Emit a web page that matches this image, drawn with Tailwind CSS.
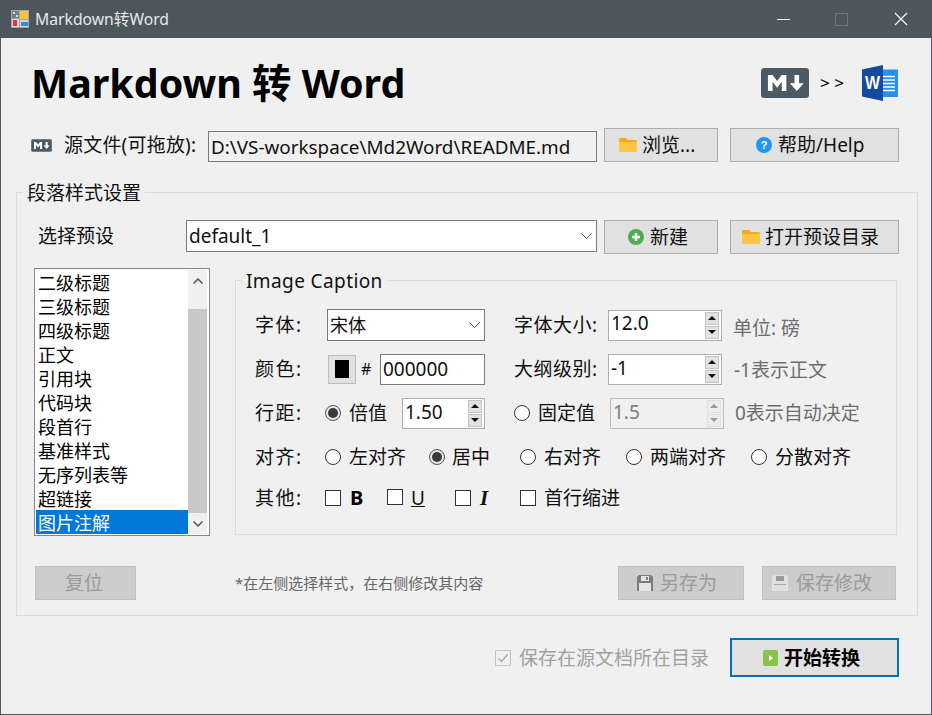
<!DOCTYPE html>
<html lang="zh-CN">
<head>
<meta charset="UTF-8">
<title>Markdown转Word</title>
<script src="https://cdn.jsdelivr.net/npm/@tailwindcss/browser@4"></script>
</head>
<body class="bg-[#f0f0f0]">
<div class="w-[932px] h-[715px] overflow-hidden border-x border-b border-[#4d565c] bg-[#f0f0f0] text-[19px] leading-[24px] text-[#111] font-['Noto_Sans','Noto_Sans_CJK_SC',sans-serif]">

  <!-- title bar -->
  <div class="h-[38px] -mx-px bg-[#4d565c] flex items-center text-[#e6e8e9] text-[15.700px]">
    <svg class="ml-[11px] w-[18px] h-[18px]" viewBox="0 0 18 18">
      <rect width="18" height="18" fill="#a2a5a7"/>
      <rect x="1" y="1" width="7" height="7" fill="#777b7f"/>
      <rect x="2" y="2" width="2" height="2" fill="#d8d8d8"/><rect x="5" y="5" width="2" height="2" fill="#d8d8d8"/>
      <rect x="9" y="1" width="8" height="8" fill="#f8c33a"/>
      <rect x="1" y="9" width="7" height="8" fill="#d8d8d8"/>
      <rect x="2" y="10" width="4" height="6" fill="#d9383a"/>
      <rect x="9" y="10" width="8" height="7" fill="#d8d8d8"/>
      <rect x="10" y="12" width="7" height="4" fill="#3f86d8"/>
    </svg>
    <span class="ml-[6px]">Markdown转Word</span>
    <div class="ml-auto flex items-center">
      <svg class="w-[13px] h-[13px] mr-[45px]" viewBox="0 0 13 13"><path d="M0 6.500h13" stroke="#fff" stroke-width="1"/></svg>
      <svg class="w-[13px] h-[13px] mr-[46px]" viewBox="0 0 13 13"><rect x=".5" y=".5" width="12" height="12" fill="none" stroke="#6f777c"/></svg>
      <svg class="w-[14px] h-[14px] mr-[24px]" viewBox="0 0 14 14"><path d="M1 1l12 12M13 1L1 13" stroke="#fff" stroke-width="1.100"/></svg>
    </div>
  </div>

  <!-- heading -->
  <div class="h-[90px] flex items-center">
    <h1 class="ml-[30px] text-[39.400px] leading-[50px] font-bold text-black whitespace-nowrap">Markdown 转 Word</h1>
    <div class="ml-auto flex items-center">
      <svg class="w-[48px] h-[30px]" viewBox="0 0 208 128" preserveAspectRatio="none">
        <rect width="208" height="128" rx="14" fill="#4d5a63"/>
        <path fill="#fff" d="M30 98V30h20l20 25 20-25h20v68H90V59L70 84 50 59v39zm125 0l-30-33h20V30h20v35h20z"/>
      </svg>
      <span class="ml-[11px] w-[42px] text-[17px] text-black">&gt; &gt;</span>
      <svg class="w-[36px] h-[36px] mr-[33px]" viewBox="0 0 36 36">
        <rect x="17" y="4.500" width="19" height="27.500" fill="#2b8fe8"/>
        <path d="M18 11.500h15M18 15h15M18 18.500h15M18 22h15M18 25.500h15" stroke="#fff" stroke-width="1.500"/>
        <path d="M0 4.500L21 0v36L0 31.500z" fill="#15489f"/>
        <text x="3" y="24" font-size="19" font-weight="700" fill="#fff" font-family="Liberation Sans" textLength="15" lengthAdjust="spacingAndGlyphs">W</text>
      </svg>
    </div>
  </div>

  <!-- source file row -->
  <div class="h-[34px] flex items-center">
    <svg class="ml-[30px] w-[21px] h-[13px]" viewBox="0 0 208 128">
      <rect x="2" y="2" width="204" height="124" rx="14" fill="#4d5a63"/>
      <path fill="#fff" d="M30 98V30h20l20 25 20-25h20v68H90V59L70 84 50 59v39zm125 0l-30-33h20V30h20v35h20z"/>
    </svg>
    <span class="ml-[12px] w-[144px] whitespace-nowrap tracking-[0.200px]">源文件(可拖放):</span>
    <div class="w-[389px] h-[31px] mt-[3px] border border-[#7a7a7a] bg-[#f0f0f0] pl-[2px] flex items-center whitespace-nowrap text-[18.850px]">D:\VS-workspace\Md2Word\README.md</div>
    <button class="ml-[7px] w-[114px] h-[34px] border border-[#adadad] bg-[#e1e1e1] flex items-center pl-[14px] gap-[5px]">
      <svg class="w-[18px] h-[14px]" viewBox="0 0 18 14"><path d="M0 1.500Q0 0 1.500 0H7l2 2h7.500Q18 2 18 3.500V4H0z" fill="#f7a81b"/><path d="M0 4h18v8.500Q18 14 16.500 14h-15Q0 14 0 12.500z" fill="#fdc640"/></svg>
      <span>浏览...</span>
    </button>
    <button class="ml-[12px] w-[169px] h-[34px] border border-[#adadad] bg-[#e1e1e1] flex items-center pl-[25px] gap-[6px]">
      <svg class="w-[16px] h-[16px]" viewBox="0 0 16 16"><circle cx="8" cy="8" r="8" fill="#2196f3"/><text x="8" y="12" text-anchor="middle" font-size="11" font-weight="700" fill="#fff" font-family="Liberation Sans">?</text></svg>
      <span>帮助/Help</span>
    </button>
  </div>

  <!-- outer group -->
  <div class="relative mt-[30px] ml-[15px] w-[902px] h-[424px] border border-[#dcdcdc]">
    <span class="absolute -top-[12px] left-[6px] px-[4px] bg-[#f0f0f0]">段落样式设置</span>

    <!-- preset row -->
    <div class="pt-[27px] flex items-start">
      <span class="ml-[21px] w-[148px] h-[32px] flex items-center">选择预设</span>
      <div class="w-[411px] h-[32px] border border-[#7a7a7a] bg-white pl-[2px] flex items-center">
        default_1
        <svg class="ml-auto mr-[4px] w-[11px] h-[6px]" viewBox="0 0 11 6"><path d="M.5.500l5 5 5-5" fill="none" stroke="#555"/></svg>
      </div>
      <button class="ml-[7px] w-[114px] h-[34px] border border-[#adadad] bg-[#e1e1e1] flex items-center pl-[23px] gap-[6px]">
        <svg class="w-[16px] h-[16px]" viewBox="0 0 16 16"><circle cx="8" cy="8" r="8" fill="#4caf50"/><path d="M8 4v8M4 8h8" stroke="#fff" stroke-width="2.500"/></svg>
        <span>新建</span>
      </button>
      <button class="ml-[12px] w-[169px] h-[34px] border border-[#adadad] bg-[#e1e1e1] flex items-center pl-[11px] gap-[5px]">
        <svg class="w-[18px] h-[14px]" viewBox="0 0 18 14"><path d="M0 1.500Q0 0 1.500 0H7l2 2h7.500Q18 2 18 3.500V4H0z" fill="#f7a81b"/><path d="M0 4h18v8.500Q18 14 16.500 14h-15Q0 14 0 12.500z" fill="#fdc640"/></svg>
        <span class="whitespace-nowrap">打开预设目录</span>
      </button>
    </div>

    <div class="mt-[14px] flex items-start">
      <!-- style list -->
      <div class="ml-[17px] w-[176px] h-[268px] border border-[#828790] bg-white flex p-px">
        <ul class="w-[152px] text-[18px] text-black">
          <li class="h-[24px] pl-[2px] pt-[2px] flex items-center">二级标题</li>
          <li class="h-[24px] pl-[2px] pt-[2px] flex items-center">三级标题</li>
          <li class="h-[24px] pl-[2px] pt-[2px] flex items-center">四级标题</li>
          <li class="h-[24px] pl-[2px] pt-[2px] flex items-center">正文</li>
          <li class="h-[24px] pl-[2px] pt-[2px] flex items-center">引用块</li>
          <li class="h-[24px] pl-[2px] pt-[2px] flex items-center">代码块</li>
          <li class="h-[24px] pl-[2px] pt-[2px] flex items-center">段首行</li>
          <li class="h-[24px] pl-[2px] pt-[2px] flex items-center">基准样式</li>
          <li class="h-[24px] pl-[2px] pt-[2px] flex items-center">无序列表等</li>
          <li class="h-[24px] pl-[2px] pt-[2px] flex items-center">超链接</li>
          <li class="h-[24px] pl-[2px] pt-[2px] flex items-center bg-[#0078d7] text-white">图片注解</li>
        </ul>
        <div class="w-[19px] h-full bg-[#f0f0f0] flex flex-col items-center">
          <div class="h-[39px] w-full flex justify-center pt-[8px]">
            <svg class="w-[10px] h-[6px]" viewBox="0 0 10 6"><path d="M.5 5.500L5 1l4.500 4.500" fill="none" stroke="#555" stroke-width="1.500"/></svg>
          </div>
          <div class="w-full h-[204px] bg-[#c8c8c8]"></div>
          <div class="flex-1 w-full flex items-center justify-center">
            <svg class="w-[10px] h-[6px]" viewBox="0 0 10 6"><path d="M.5.500L5 5l4.500-4.500" fill="none" stroke="#555" stroke-width="1.500"/></svg>
          </div>
        </div>
      </div>

      <!-- inner group -->
      <div class="relative mt-[12px] ml-[25px] w-[662px] h-[255px] border border-[#dcdcdc] pt-[22px]">
        <span class="absolute -top-[12px] left-[6px] px-[4px] bg-[#f0f0f0] whitespace-nowrap tracking-[0.400px]">Image Caption</span>

        <!-- font row -->
        <div class="h-[44px] flex items-center">
          <span class="w-[91px] pl-[19px] tracking-[1.500px]">字体:</span>
          <div class="w-[158px] h-[32px] border border-[#7a7a7a] bg-white pl-[2px] flex items-center text-[18px]">
            宋体
            <svg class="ml-auto mr-[4px] w-[11px] h-[6px]" viewBox="0 0 11 6"><path d="M.5.500l5 5 5-5" fill="none" stroke="#555"/></svg>
          </div>
          <span class="ml-[29px] w-[94px] whitespace-nowrap tracking-[0.500px]">字体大小:</span>
          <div class="w-[114px] h-[31px] border border-[#adadad] bg-white pl-[2px] flex items-center">
            <span class="-translate-y-[2px]">12.0</span>
            <div class="ml-auto mr-[2px] w-[14px] h-[27px] flex flex-col gap-px">
              <div class="flex-1 bg-[#e1e1e1] border border-[#c4c4c4] flex items-center justify-center"><svg class="w-[8px] h-[4px]" viewBox="0 0 8 4"><path d="M4 0l4 4H0z" fill="#111"/></svg></div>
              <div class="flex-1 bg-[#e1e1e1] border border-[#c4c4c4] flex items-center justify-center"><svg class="w-[8px] h-[4px]" viewBox="0 0 8 4"><path d="M0 0h8L4 4z" fill="#111"/></svg></div>
            </div>
          </div>
          <span class="ml-[11px] text-[#6d6d6d] whitespace-nowrap translate-y-[3px]">单位: 磅</span>
        </div>

        <!-- colour row -->
        <div class="h-[44px] flex items-center">
          <span class="w-[92px] pl-[19px] tracking-[1.500px]">颜色:</span>
          <div class="w-[28px] h-[29px] border border-[#bdbdbd] bg-[#e1e1e1] flex items-center justify-center"><div class="w-[14px] h-[18px] bg-black"></div></div>
          <span class="ml-[5px] w-[19px] text-[16px]">#</span>
          <div class="w-[105px] h-[31px] border border-[#7a7a7a] bg-white pl-[2px] flex items-center">000000</div>
          <span class="ml-[29px] w-[94px] whitespace-nowrap tracking-[0.500px]">大纲级别:</span>
          <div class="w-[114px] h-[31px] border border-[#adadad] bg-white pl-[2px] flex items-center">
            <span class="-translate-y-px">-1</span>
            <div class="ml-auto mr-[2px] w-[14px] h-[27px] flex flex-col gap-px">
              <div class="flex-1 bg-[#e1e1e1] border border-[#c4c4c4] flex items-center justify-center"><svg class="w-[8px] h-[4px]" viewBox="0 0 8 4"><path d="M4 0l4 4H0z" fill="#111"/></svg></div>
              <div class="flex-1 bg-[#e1e1e1] border border-[#c4c4c4] flex items-center justify-center"><svg class="w-[8px] h-[4px]" viewBox="0 0 8 4"><path d="M0 0h8L4 4z" fill="#111"/></svg></div>
            </div>
          </div>
          <span class="ml-[12px] text-[#6d6d6d] whitespace-nowrap translate-y-px">-1表示正文</span>
        </div>

        <!-- line spacing row -->
        <div class="h-[44px] flex items-center">
          <span class="w-[89px] pl-[19px] tracking-[1.500px]">行距:</span>
          <span class="w-[16px] h-[16px] rounded-full border border-[#555] bg-[#e6e6e6] flex items-center justify-center"><span class="w-[10px] h-[10px] rounded-full bg-[#3a3a3a]"></span></span>
          <span class="ml-[8px] w-[53px]">倍值</span>
          <div class="w-[83px] h-[31px] border border-[#adadad] bg-white pl-[2px] flex items-center">
            <span class="-translate-y-px">1.50</span>
            <div class="ml-auto mr-[2px] w-[14px] h-[27px] flex flex-col gap-px">
              <div class="flex-1 bg-[#e1e1e1] border border-[#c4c4c4] flex items-center justify-center"><svg class="w-[8px] h-[4px]" viewBox="0 0 8 4"><path d="M4 0l4 4H0z" fill="#111"/></svg></div>
              <div class="flex-1 bg-[#e1e1e1] border border-[#c4c4c4] flex items-center justify-center"><svg class="w-[8px] h-[4px]" viewBox="0 0 8 4"><path d="M0 0h8L4 4z" fill="#111"/></svg></div>
            </div>
          </div>
          <span class="ml-[29px] w-[16px] h-[16px] rounded-full border border-[#333] bg-white"></span>
          <span class="ml-[8px] w-[72px]">固定值</span>
          <div class="w-[114px] h-[31px] border border-[#bcbcbc] bg-[#f0f0f0] pl-[2px] flex items-center text-[#7d7d7d]">
            <span class="-translate-y-px">1.5</span>
            <div class="ml-auto mr-[2px] w-[14px] h-[27px] flex flex-col gap-px">
              <div class="flex-1 bg-[#ececec] border border-[#dedede] flex items-center justify-center"><svg class="w-[8px] h-[4px]" viewBox="0 0 8 4"><path d="M4 0l4 4H0z" fill="#9a9a9a"/></svg></div>
              <div class="flex-1 bg-[#ececec] border border-[#dedede] flex items-center justify-center"><svg class="w-[8px] h-[4px]" viewBox="0 0 8 4"><path d="M0 0h8L4 4z" fill="#9a9a9a"/></svg></div>
            </div>
          </div>
          <span class="ml-[11px] text-[#6d6d6d] whitespace-nowrap">0表示自动决定</span>
        </div>

        <!-- alignment row -->
        <div class="h-[44px] flex items-center whitespace-nowrap">
          <span class="w-[89px] pl-[19px] tracking-[1.500px]">对齐:</span>
          <span class="w-[16px] h-[16px] rounded-full border border-[#333] bg-white"></span>
          <span class="ml-[8px] w-[80px]">左对齐</span>
          <span class="w-[16px] h-[16px] rounded-full border border-[#555] bg-[#e6e6e6] flex items-center justify-center"><span class="w-[10px] h-[10px] rounded-full bg-[#3a3a3a]"></span></span>
          <span class="ml-[7px] w-[68px]">居中</span>
          <span class="w-[16px] h-[16px] rounded-full border border-[#333] bg-white"></span>
          <span class="ml-[8px] w-[82px]">右对齐</span>
          <span class="w-[16px] h-[16px] rounded-full border border-[#333] bg-white"></span>
          <span class="ml-[8px] w-[101px]">两端对齐</span>
          <span class="w-[16px] h-[16px] rounded-full border border-[#333] bg-white"></span>
          <span class="ml-[8px]">分散对齐</span>
        </div>

        <!-- other row -->
        <div class="h-[38px] flex items-center whitespace-nowrap">
          <span class="w-[89px] pl-[19px] tracking-[1.500px]">其他:</span>
          <span class="w-[16px] h-[16px] border border-[#333] bg-white"></span>
          <span class="ml-[9px] w-[37px] font-bold text-black text-[20px]">B</span>
          <span class="w-[16px] h-[16px] mb-[2px] border border-[#333] bg-white"></span>
          <span class="ml-[8px] w-[44px] underline">U</span>
          <span class="w-[16px] h-[16px] border border-[#333] bg-white"></span>
          <span class="ml-[9px] w-[40px] italic font-bold text-[21px] font-['Liberation_Serif',serif]">I</span>
          <span class="w-[16px] h-[16px] border border-[#333] bg-white"></span>
          <span class="ml-[8px]">首行缩进</span>
        </div>
      </div>
    </div>

    <!-- bottom actions -->
    <div class="mt-[30px] flex items-center whitespace-nowrap text-[#9b9b9b]">
      <button class="ml-[18px] w-[101px] h-[34px] border border-[#bfbfbf] bg-[#cccccc] pr-[3px]">复位</button>
      <span class="ml-[99px] w-[383px] text-[15px] text-[#666]">*在左侧选择样式&#65292;在右侧修改其内容</span>
      <button class="w-[126px] h-[34px] border border-[#bfbfbf] bg-[#cccccc] flex items-center pl-[18px] gap-[7px]">
        <svg class="w-[16px] h-[16px]" viewBox="0 0 16 16"><path d="M2 0h12l2 2v14H0V2z" fill="#7d7d7d"/><rect x="4" y="1" width="8" height="5" fill="#e4e4e4"/><rect x="9" y="2" width="2" height="3" fill="#7d7d7d"/><rect x="2" y="8" width="12" height="8" fill="#e4e4e4"/></svg>
        <span>另存为</span>
      </button>
      <button class="ml-[18px] w-[134px] h-[34px] border border-[#bfbfbf] bg-[#cccccc] flex items-center pl-[9px] gap-[8px]">
        <svg class="w-[16px] h-[16px]" viewBox="0 0 16 16"><path d="M2 0h12l2 2v14H0V2z" fill="#e0e0e0"/><rect x="4" y="1" width="8" height="5" fill="#9a9a9a"/><rect x="2" y="9" width="12" height="1" fill="#a8a8a8"/></svg>
        <span>保存修改</span>
      </button>
    </div>
  </div>

  <!-- footer -->
  <div class="mt-[22px] flex items-center whitespace-nowrap">
    <svg class="ml-[494px] w-[16px] h-[16px]" viewBox="0 0 16 16"><rect x=".5" y=".5" width="15" height="15" fill="#f0f0f0" stroke="#c4c4c4"/><path d="M3.500 8.500l3 3 6-7" fill="none" stroke="#a8a8a8" stroke-width="1.200"/></svg>
    <span class="ml-[8px] w-[211px] text-[#a0a0a0]">保存在源文档所在目录</span>
    <button class="w-[169px] h-[39px] border-2 border-[#0b6fb8] bg-[#e1e1e1] flex items-center pl-[31px] gap-[6px] font-bold text-black">
      <svg class="w-[15px] h-[16px]" viewBox="0 0 15 16"><rect width="15" height="16" rx="2" fill="#8bc34a"/><path d="M6 5l4 3-4 3z" fill="#fff"/></svg>
      <span>开始转换</span>
    </button>
  </div>
</div>
</body>
</html>
